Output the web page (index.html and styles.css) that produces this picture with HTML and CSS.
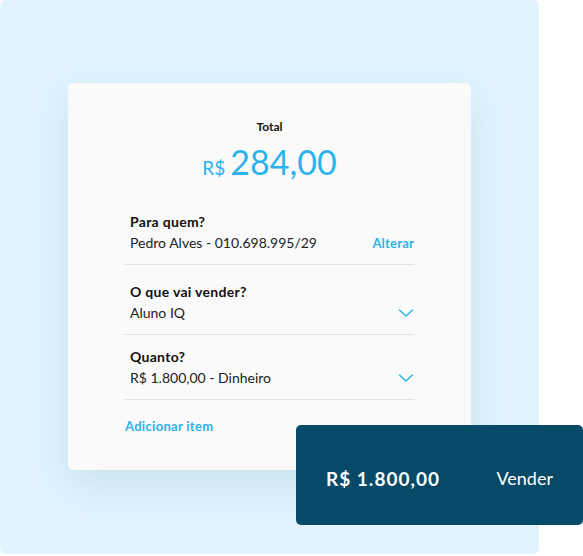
FILE: index.html
```html
<!DOCTYPE html>
<html lang="pt-BR">
<head>
<meta charset="utf-8">
<title>Venda</title>
<link rel="stylesheet" href="styles.css">
</head>
<body>
<div class="stage">
  <div class="panel">
    <div class="card">
      <div class="total">
        <div class="total-label">Total</div>
        <div class="total-value"><span class="cur">R$</span><span class="amount">284,00</span></div>
      </div>
      <div class="rows">
        <div class="row row-first">
          <div class="row-text">
            <div class="row-label">Para quem?</div>
            <div class="row-value">Pedro Alves - 010.698.995/29</div>
          </div>
          <a class="row-link">Alterar</a>
        </div>
        <div class="row row-second">
          <div class="row-text">
            <div class="row-label">O que vai vender?</div>
            <div class="row-value">Aluno IQ</div>
          </div>
          <svg class="chev" width="16" height="10" viewBox="0 0 16 10"><path d="M1.5 2 L8 8 L14.5 2" fill="none" stroke="#2ab3ee" stroke-width="1.5" stroke-linecap="round" stroke-linejoin="round"/></svg>
        </div>
        <div class="row row-third">
          <div class="row-text">
            <div class="row-label">Quanto?</div>
            <div class="row-value">R$ 1.800,00 - Dinheiro</div>
          </div>
          <svg class="chev" width="16" height="10" viewBox="0 0 16 10"><path d="M1.5 2 L8 8 L14.5 2" fill="none" stroke="#2ab3ee" stroke-width="1.5" stroke-linecap="round" stroke-linejoin="round"/></svg>
        </div>
        <a class="add">Adicionar item</a>
      </div>
    </div>
  </div>
  <div class="sell">
    <span class="sell-amount">R$ 1.800,00</span>
    <span class="sell-action">Vender</span>
  </div>
</div>
</body>
</html>
```

FILE: styles.css
```css
* { box-sizing: border-box; }
html, body { margin: 0; padding: 0; background: #ffffff; }
body {
  font-family: Lato, "Open Sans", sans-serif;
  color: #111;
  width: 583px;
  height: 556px;
  overflow: hidden;
}
.stage { position: relative; width: 583px; height: 556px; }
.panel {
  width: 539px;
  height: 554px;
  background: #e1f4fd;
  border-radius: 6px;
  padding: 83px 0 0 68px;
}
.card {
  width: 403px;
  height: 387px;
  background: #fafafa;
  border-radius: 5px;
  box-shadow: 0 14px 40px rgba(40, 110, 150, 0.14);
  padding-top: 119px;
  position: relative;
}
.total {
  position: absolute;
  top: 0; left: 0; right: 0;
  display: flex;
  flex-direction: column;
  align-items: center;
  padding-top: 36px;
}
.total-label { font-size: 12px; font-weight: 700; color: #111; line-height: 16px; }
.total-value {
  display: flex;
  align-items: baseline;
  color: #2ab3ee;
  margin-top: 7px;
}
.cur { font-size: 19px; margin-right: 5px; }
.amount { font-size: 34px; line-height: 40px; }
.rows { margin: 0 57px 0 56px; display: flex; flex-direction: column; }
.row {
  display: flex;
  align-items: flex-end;
  justify-content: space-between;
  padding: 12px 0 11px 6px;
  border-bottom: 1px solid #e3e3e3;
}
.row-first { padding-top: 10px; }
.row-second { padding-top: 17px; }
.row-third { padding-top: 12px; }
.row-label { font-size: 14px; font-weight: 700; color: #111; line-height: 20px; letter-spacing: 0.3px; }
.row-value { font-size: 14px; color: #222; line-height: 20px; margin-top: 1px; }
.row-link { font-size: 13px; font-weight: 700; color: #2ab3ee; line-height: 20px; letter-spacing: 0.2px; }
.chev { margin-bottom: 5px; }
.add {
  font-size: 13px;
  font-weight: 700;
  color: #2ab3ee;
  line-height: 16px;
  margin-top: 18px;
  padding-left: 1px;
  letter-spacing: 0.3px;
}
.sell {
  position: absolute;
  left: 296px;
  top: 425px;
  width: 287px;
  height: 100px;
  background: #064a67;
  border-radius: 5px;
  display: flex;
  align-items: center;
  justify-content: space-between;
  padding: 6px 30px 0 30px;
  color: #fff;
}
.sell-amount { font-size: 19px; font-weight: 700; letter-spacing: 1px; }
.sell-action { font-size: 18px; font-weight: 400; }
```
